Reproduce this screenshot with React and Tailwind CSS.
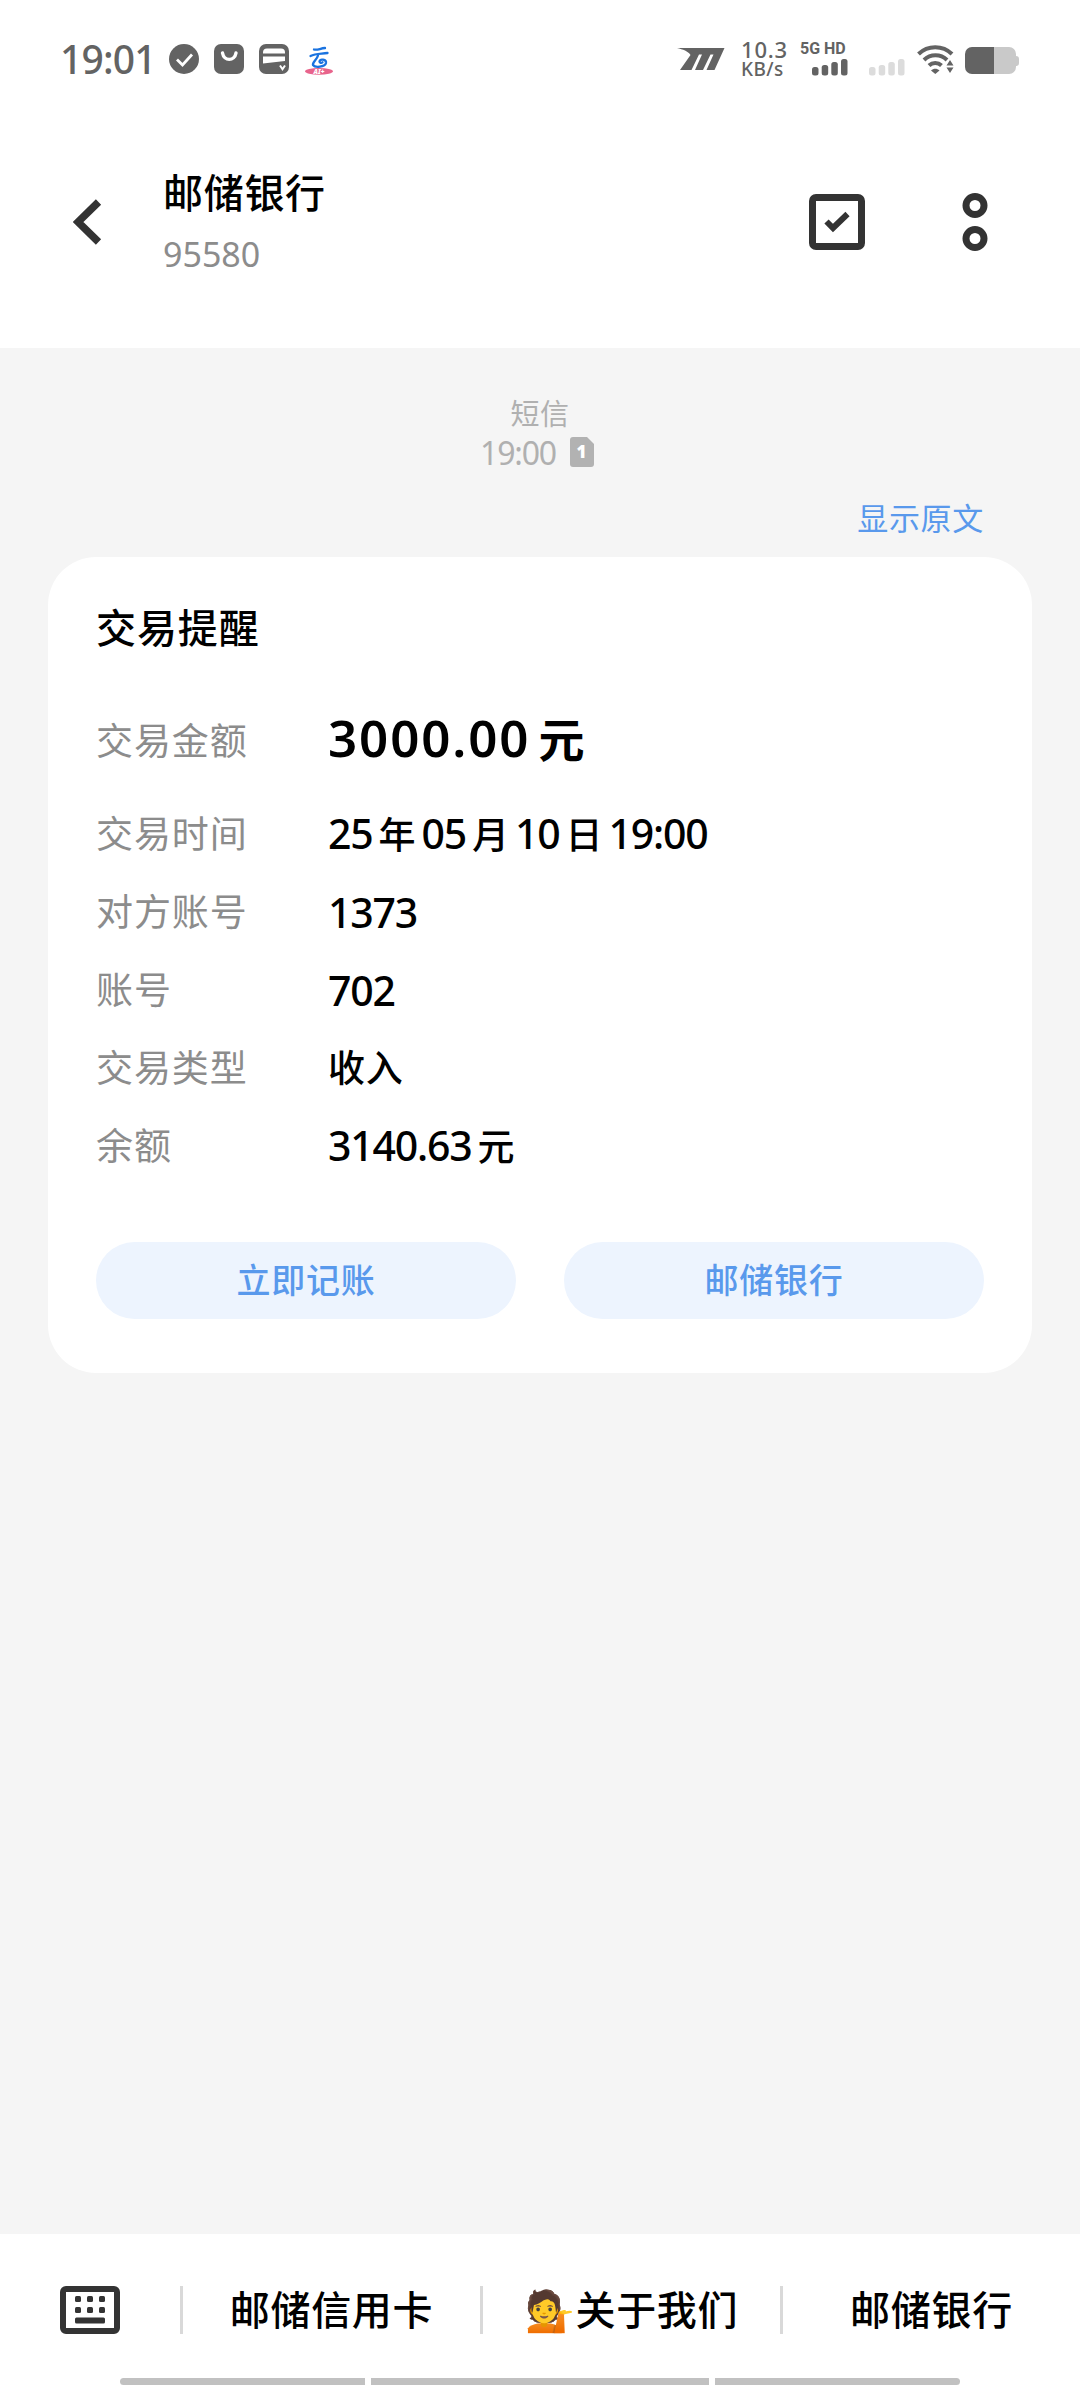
import React from "react";

const details = [
  { label: "交易时间", value: "25年05月10日19:00" },
  { label: "对方账号", value: "1373" },
  { label: "账号", value: "702" },
  { label: "交易类型", value: "收入" },
  { label: "余额", value: "3140.63元" },
];

const cardActions = ["立即记账", "邮储银行"];

const menus = ["邮储信用卡", "💁关于我们", "邮储银行"];

// Splits a value so that digits and Chinese characters can be spaced apart
function MixedText({ text, digitClass, hanClass }) {
  return text.match(/[\d.:]+|[^\d.:]+/g).map((part, i) => (
    <span key={i} className={/\d/.test(part) ? digitClass : i > 0 ? hanClass : "text-[37px] tracking-[0.7px]"}>
      {part}
    </span>
  ));
}

function SignalBars({ className }) {
  return (
    <svg width="36" height="17" viewBox="0 0 36 17" className={className} fill="currentColor">
      <rect x="0" y="8" width="6.5" height="8.5" rx="2.5" />
      <rect x="9.7" y="6" width="6.5" height="10.5" rx="2.5" />
      <rect x="19.3" y="3" width="6.5" height="13.5" rx="2.5" />
      <rect x="29" y="0" width="6.5" height="16.5" rx="2.5" />
    </svg>
  );
}

function StatusBar() {
  return (
    <div className="h-[118px] flex justify-between pl-[60px] pr-[61px] text-[#636363]">
      <div className="flex items-center h-[118px]">
        <span className="w-[109px] text-[39px] leading-[40px] font-medium whitespace-nowrap tracking-[-0.8px]">
          19:01
        </span>
        <svg width="165" height="32" viewBox="0 0 165 32">
          <circle cx="15" cy="16" r="15" fill="#636363" />
          <path d="M8 16.5l5.5 5.5 9.5-10.5" fill="none" stroke="#fff" strokeWidth="2.8" />
          <rect x="45" y="1" width="30" height="30" rx="7" fill="#636363" />
          <path d="M53.5 10c1.5 8.5 12 8.5 13.5 0" fill="none" stroke="#fff" strokeWidth="3.4" strokeLinecap="round" />
          <rect x="90" y="1" width="30" height="30" rx="7" fill="#636363" />
          <path d="M94 10.5v-1a4 4 0 0 1 4-4h14a4 4 0 0 1 4 4v1z" fill="#fff" />
          <path d="M94 13.5h22v4.5l-22 2.5z" fill="#fff" />
          <path d="M111 22.5l2.5 3.8 2.5-3.8" fill="none" stroke="#fff" strokeWidth="2" />
          <ellipse cx="150" cy="28.3" rx="14" ry="3.4" fill="#e8648c" />
          <path
            d="M145 6.5c3 1 6-1 11-1.5M141.5 13c5-2.5 10-2 17-3M149 12.5c-1 4-6 7-5 9.5 2 3 12 2 13-2 .5-4-6-4.5-6.5-1.5 0 1.5 2 1.8 3 .8"
            fill="none"
            stroke="#1a73e0"
            strokeWidth="2.3"
            strokeLinecap="round"
          />
          <text x="150" y="30.8" textAnchor="middle" fontSize="6.5" fontWeight="900" fontStyle="italic" fill="#fff">
            AI+
          </text>
        </svg>
      </div>

      <div className="flex items-start pt-[39px]">
        <svg width="48" height="23" viewBox="0 0 48 23" className="mt-[9px]" fill="#636363">
          <path d="M0 0H47.5L37.5 22H29.5L36.5 6.5H33.5L26 22H18L25 6.5H22L14.5 22H3L13.5 7C11 3 6 1.5 0 0z" />
        </svg>
        <div className="w-[58px] pl-[16px] font-medium whitespace-nowrap">
          <p className="text-[22px] leading-[20px] tracking-[0.8px]">10.3</p>
          <p className="text-[19px] leading-[20px] tracking-[0.4px]">KB/s</p>
        </div>
        <div className="ml-[17px] w-[52px]">
          <p className="font-[Roboto] text-[16px] leading-[19px] font-bold whitespace-nowrap">5G HD</p>
          <SignalBars className="ml-[12px] mt-[1px]" />
        </div>
        <SignalBars className="ml-[17px] mt-[20px] text-[#dcdcdc]" />
        <svg width="38" height="30" viewBox="0 0 38 30" className="ml-[12px] mt-[5px]">
          <g fill="none" stroke="#636363" strokeWidth="4">
            <path d="M1.5 10a24 24 0 0 1 33.5 0" />
            <path d="M7 16a16.5 16.5 0 0 1 23 0" />
            <path d="M12 21.5a9 9 0 0 1 12.5 0" />
          </g>
          <path d="M14 26.5c2.5-2.5 6-2.5 8.5 0l-4.2 3.5z" fill="#636363" />
          <path d="M33 16l3.5 5.5h-7zM33 29l3.5-5.5h-7z" fill="#636363" />
        </svg>
        <svg width="54" height="28" viewBox="0 0 54 28" className="ml-[10px] mt-[8px]">
          <path d="M29 0h15a7 7 0 0 1 7 7v2a3 3 0 0 1 3 3v4a3 3 0 0 1-3 3v1a7 7 0 0 1-7 7H29z" fill="#c9c9c9" />
          <path d="M29 0H7a7 7 0 0 0-7 7v13a7 7 0 0 0 7 7h22z" fill="#636363" />
        </svg>
      </div>
    </div>
  );
}

function Header() {
  return (
    <div className="h-[230px] flex pl-[73px] pr-[92px]">
      <svg width="30" height="48" viewBox="0 0 30 48" className="mt-[80px]">
        <path d="M25.5 4L5 24l20.5 20" fill="none" stroke="#333" strokeWidth="7.5" />
      </svg>
      <div className="ml-[60px] flex-1">
        <h1 className="mt-[50px] h-[50px] text-[40px] leading-[50px] font-medium tracking-[0.7px] text-black">
          邮储银行
        </h1>
        <p className="mt-[15px] text-[34px] leading-[42px] text-[#8c8c8c]">95580</p>
      </div>
      <svg width="56" height="56" viewBox="0 0 56 56" className="mt-[76px]">
        <rect x="3.5" y="3.5" width="49" height="49" rx="3.5" fill="none" stroke="#333" strokeWidth="7" />
        <path d="M17.5 27.5l6.5 6.5 14.5-14" fill="none" stroke="#333" strokeWidth="6" />
      </svg>
      <svg width="26" height="60" viewBox="0 0 26 60" className="ml-[97px] mt-[74px]">
        <circle cx="13" cy="13.5" r="9" fill="none" stroke="#333" strokeWidth="7" />
        <circle cx="13" cy="46.5" r="9" fill="none" stroke="#333" strokeWidth="7" />
      </svg>
    </div>
  );
}

function TransactionCard() {
  return (
    <div className="mx-[48px] h-[816px] rounded-[48px] bg-white px-[48px] pt-[41px]">
      <h2 className="h-[60px] text-[40px] leading-[60px] font-medium tracking-[0.9px]">交易提醒</h2>

      <div className="mt-[34px] h-[92px] flex items-center">
        <span className="w-[232px] pt-[6px] text-[37px] tracking-[0.9px] text-[#8c8c8c]">交易金额</span>
        <span className="flex items-baseline font-semibold leading-[60px]">
          <MixedText
            text="3000.00元"
            digitClass="text-[51px] tracking-[1.9px]"
            hanClass="ml-[8px] text-[46px]"
          />
        </span>
      </div>

      <div className="mt-[11px]">
        {details.map((row) => (
          <div key={row.label} className="h-[78px] flex items-center">
            <span className="w-[232px] text-[37px] tracking-[0.9px] text-[#8c8c8c]">{row.label}</span>
            <span className="flex items-baseline font-medium leading-[50px]">
              <MixedText
                text={row.value}
                digitClass="text-[41px] tracking-[-1.2px]"
                hanClass="mx-[6px] text-[37px]"
              />
            </span>
          </div>
        ))}
      </div>

      <div className="mt-[57px] flex gap-[48px]">
        {cardActions.map((action) => (
          <button
            key={action}
            className="flex-1 h-[77px] rounded-full bg-[#edf4fe] text-[34px] leading-[77px] font-medium tracking-[0.7px] text-[#5999ec]"
          >
            {action}
          </button>
        ))}
      </div>
    </div>
  );
}

function BottomMenu() {
  return (
    <div className="h-[154px] bg-white">
      <div className="h-[144px] flex items-center">
        <div className="w-[180px] pl-[60px] pt-[8px]">
          <svg width="60" height="48" viewBox="0 0 60 48">
            <rect x="3" y="3" width="54" height="42" rx="3" fill="none" stroke="#333" strokeWidth="6" />
            <g fill="#333">
              <rect x="15" y="10" width="6" height="6" rx="1.5" />
              <rect x="27" y="10" width="6" height="6" rx="1.5" />
              <rect x="39" y="10" width="6" height="6" rx="1.5" />
              <rect x="15" y="21" width="6" height="6" rx="1.5" />
              <rect x="27" y="21" width="6" height="6" rx="1.5" />
              <rect x="39" y="21" width="6" height="6" rx="1.5" />
              <rect x="15" y="31.5" width="30" height="6" rx="1.5" />
            </g>
          </svg>
        </div>
        {menus.map((menu) => (
          <div key={menu} className="flex-1 flex items-center pt-[8px]">
            <div className="w-[3px] h-[48px] bg-[#d9d9d9]" />
            <span className="flex-1 text-center text-[40px] leading-[48px] font-medium tracking-[0.7px] whitespace-nowrap">
              {menu}
            </span>
          </div>
        ))}
      </div>
      {/* Gesture bar */}
      <div className="flex gap-[6px] px-[120px]">
        <div className="w-[245px] h-[7px] rounded-l-full bg-[#c1c1c1]" />
        <div className="flex-1 h-[7px] bg-[#c1c1c1]" />
        <div className="w-[245px] h-[7px] rounded-r-full bg-[#c1c1c1]" />
      </div>
    </div>
  );
}

export default function App() {
  return (
    <div className="w-[1080px] h-[2388px] flex flex-col bg-white text-black font-['Noto_Sans','Noto_Sans_CJK_SC',sans-serif]">
      <StatusBar />
      <Header />
      <div className="flex-1 bg-[#f5f5f5]">
        <div className="pt-[46px] text-center text-[#b0b0b0]">
          <p className="text-[29px] leading-[40px] tracking-[0.5px]">短信</p>
          <div className="flex items-center justify-center pr-[6px]">
            <span className="text-[32px] leading-[38px] tracking-[-1.2px]">19:00</span>
            <svg width="24" height="30" viewBox="0 0 24 30" className="ml-[14px] mb-[3px]">
              <path d="M3 0h14l7 7v20a3 3 0 0 1-3 3H3a3 3 0 0 1-3-3V3a3 3 0 0 1 3-3z" fill="#b2b2b2" />
              <text x="11.5" y="21" textAnchor="middle" fontSize="17" fontWeight="900" fill="#fff">
                1
              </text>
            </svg>
          </div>
        </div>
        <div className="mt-[23px] h-[62px] pr-[96px] text-right text-[31px] leading-[46px] tracking-[0.7px] text-[#5999ec]">
          显示原文
        </div>
        <TransactionCard />
      </div>
      <BottomMenu />
    </div>
  );
}
